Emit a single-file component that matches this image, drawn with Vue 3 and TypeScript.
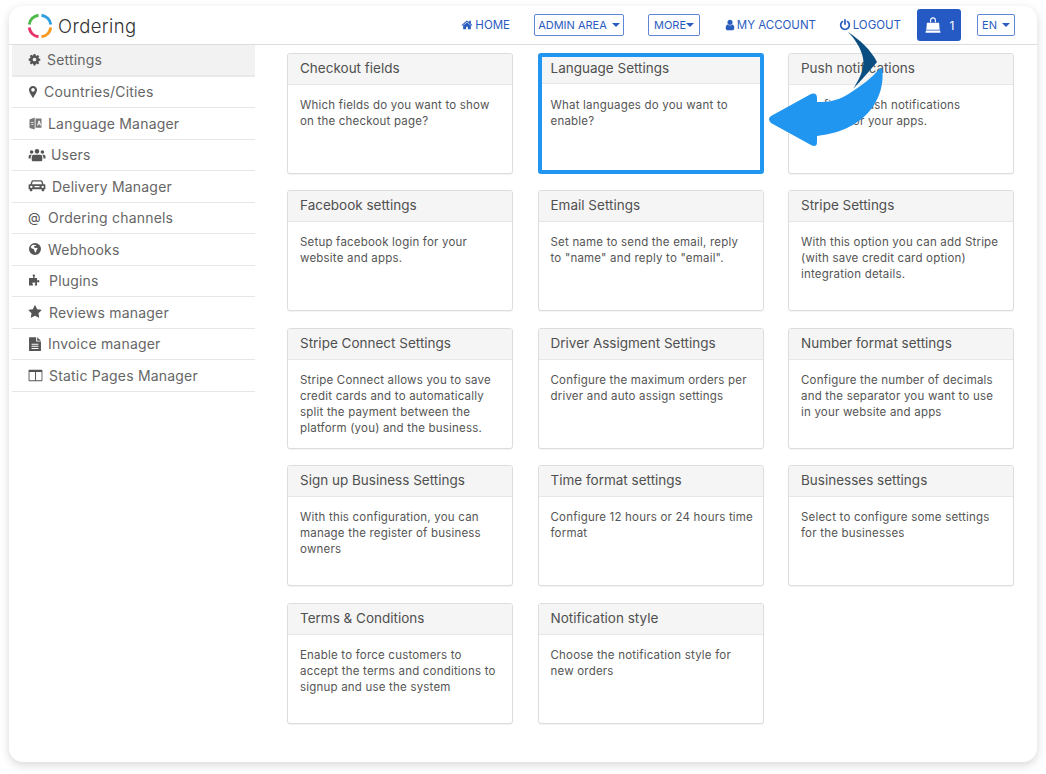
<script setup lang="ts">
interface Side { label: string; icon: string; w: number; gap: number; size: number }
interface Card { title: string; text: string; active?: boolean }

const fa: Record<string, string> = {
  home: 'M1472 992v480q0 26-19 45t-45 19h-384v-384h-256v384h-384q-26 0-45-19t-19-45v-480q0-1 .5-3t.5-3l575-474 575 474q1 2 1 6zm223-69l-62 74q-8 9-21 11h-3q-13 0-21-7l-692-577-692 577q-12 8-24 7-13-2-21-11l-62-74q-8-10-7-23.5t11-21.5l719-599q32-26 76-26t76 26l244 204v-195q0-14 9-23t23-9h192q14 0 23 9t9 23v408l219 182q10 8 11 21.5t-7 23.5z',
  user: 'M1536 1399q0 109-62.500 187t-150.500 78h-854q-88 0-150.500-78t-62.500-187q0-85 8.500-160.500t31.500-152 58.500-131 94-89 134.500-34.500q131 128 313 128t313-128q76 0 134.500 34.500t94 89 58.500 131 31.500 152 8.500 160.500zm-256-887q0 159-112.500 271.500t-271.500 112.500-271.500-112.500-112.500-271.500 112.500-271.500 271.500-112.500 271.500 112.500 112.500 271.500z',
  power: 'M1664 896q0 156-61 298t-164 245-245 164-298 61-298-61-245-164-164-245-61-298q0-182 80.500-343t226.500-270q43-32 95.500-25t83.500 50q32 42 24.500 94.500t-49.500 84.500q-98 74-151.500 181t-53.500 228q0 104 40.500 198.500t109.500 163.500 163.500 109.500 198.500 40.500 198.500-40.500 163.500-109.500 109.500-163.500 40.500-198.500q0-121-53.500-228t-151.500-181q-42-32-49.500-84.500t24.500-94.500q31-43 84-50t95 25q146 109 226.500 270t80.500 343zm-640-768v640q0 52-38 90t-90 38-90-38-38-90v-640q0-52 38-90t90-38 90 38 38 90z',
  star: 'M1728 647q0 22-26 48l-363 354 86 500q1 7 1 20 0 21-10.500 35.500t-30.500 14.500q-19 0-40-12l-449-236-449 236q-22 12-40 12-21 0-31.500-14.500t-10.500-35.500q0-6 2-20l86-500-364-354q-25-27-25-48 0-37 56-46l502-73 225-455q19-41 49-41t49 41l225 455 502 73q56 9 56 46z',
  gear: 'M896 1152a256 256 0 1 0 0-512 256 256 0 0 0 0 512zM768 128h256l40 200q70 20 130 58l170-112 182 182-112 170q38 60 58 130l200 40v256l-200 40q-20 70-58 130l112 170-182 182-170-112q-60 38-130 58l-40 200H768l-40-200q-70-20-130-58l-170 112-182-182 112-170q-38-60-58-130l-200-40V768l200-40q20-70 58-130L246 428l182-182 170 112q60-38 130-58z',
  marker: 'M896 128c-300 0-512 220-512 500 0 260 420 900 512 1036 92-136 512-776 512-1036 0-280-212-500-512-500zm0 730a230 230 0 1 1 0-460 230 230 0 0 1 0 460z',
  language: 'M180 420l620-240v1430l-620-190zM900 300h710v1110H900zM1250 560l-170 560h120l30-110h190l30 110h120l-170-560zM1260 900l50-190 50 190zM340 760h320v90H340zM400 980h240v90H400z',
  users: 'M896 300a230 230 0 1 1 0 460 230 230 0 0 1 0-460zM360 420a180 180 0 1 1 0 360 180 180 0 0 1 0-360zM1432 420a180 180 0 1 1 0 360 180 180 0 0 1 0-360zM560 860h672q190 0 190 300v240q0 120-130 120H500q-130 0-130-120v-240q0-300 190-300zM60 1240V1040q0-180 160-180h170q-120 90-130 300v80zM1740 1240h-200v-80q-10-210-130-300h170q160 0 160 180z',
  car: 'M480 320h832q90 0 125 85l105 315h90q100 0 100 100v400h-120v130q0 60-60 60h-130q-60 0-60-60v-130H430v130q0 60-60 60H240q-60 0-60-60v-130H60V820q0-100 100-100h90l105-315q35-85 125-85zm20 140q-20 0-28 20l-80 240h1008l-80-240q-8-20-28-20zM330 860a120 120 0 1 0 0 240 120 120 0 0 0 0-240zm1132 0a120 120 0 1 0 0 240 120 120 0 0 0 0-240zM650 900v120h492V900z',
  globe: 'M896 128a768 768 0 1 1 0 1536 768 768 0 0 1 0-1536zM760 340L520 420 340 640l140 180 260 60 60 220 120 240 110-40 60-280 160-160-110-130-240 40-150-120 120-160 140 30 60-100z',
  puzzle: 'M620 420q-70-70-70-130 0-110 150-110t150 110q0 60-70 130v180h300v300q90-70 160-70 120 0 120 150t-120 150q-70 0-160-70v420H820v-160q80-60 80-120 0-80-200-80t-200 80q0 60 80 120v160H120V600h500z',
  file: 'M1024 128v500h540v1000q0 60-60 60H288q-60 0-60-60V188q0-60 60-60zM1140 128l424 400h-424zM512 860v110h768V860zm0 240v110h768v-110zm0 240v110h768v-110z',
  columns: 'M140 220h1512q70 0 70 70v1210q0 70-70 70H140q-70 0-70-70V290q0-70 70-70zm40 250v990h660V470zm780 0v990h660V470z',
  bag: 'M600 620V450C600 250 720 130 896 130s296 120 296 320v170h-110V450c0-130-70-210-186-210s-186 80-186 210v170zM290 680h1212l60 700H230zM190 1450h1412l40 210H150z'
}

const sideItems: Side[] = [
  { label: 'Settings', icon: 'gear', w: 13, gap: 6, size: 13 },
  { label: 'Countries/Cities', icon: 'marker', w: 10, gap: 6, size: 14 },
  { label: 'Language Manager', icon: 'language', w: 14, gap: 6, size: 15 },
  { label: 'Users', icon: 'users', w: 17, gap: 6, size: 18 },
  { label: 'Delivery Manager', icon: 'car', w: 17, gap: 7, size: 18 },
  { label: 'Ordering channels', icon: 'at', w: 13, gap: 7, size: 13 },
  { label: 'Webhooks', icon: 'globe', w: 13, gap: 7, size: 14 },
  { label: 'Plugins', icon: 'puzzle', w: 14, gap: 7, size: 15 },
  { label: 'Reviews manager', icon: 'star', w: 14, gap: 7, size: 14 },
  { label: 'Invoice manager', icon: 'file', w: 13, gap: 7, size: 16 },
  { label: 'Static Pages Manager', icon: 'columns', w: 14, gap: 7, size: 15 }
]

const cards: Card[] = [
  { title: 'Checkout fields', text: 'Which fields do you want to show\non the checkout page?' },
  { title: 'Language Settings', text: 'What languages do you want to\nenable?', active: true },
  { title: 'Push notifications', text: 'Configure push notifications\nsettings for your apps.' },
  { title: 'Facebook settings', text: 'Setup facebook login for your\nwebsite and apps.' },
  { title: 'Email Settings', text: 'Set name to send the email, reply\nto "name" and reply to "email".' },
  { title: 'Stripe Settings', text: 'With this option you can add Stripe\n(with save credit card option)\nintegration details.' },
  { title: 'Stripe Connect Settings', text: 'Stripe Connect allows you to save\ncredit cards and to automatically\nsplit the payment between the\nplatform (you) and the business.' },
  { title: 'Driver Assigment Settings', text: 'Configure the maximum orders per\ndriver and auto assign settings' },
  { title: 'Number format settings', text: 'Configure the number of decimals\nand the separator you want to use\nin your website and apps' },
  { title: 'Sign up Business Settings', text: 'With this configuration, you can\nmanage the register of business\nowners' },
  { title: 'Time format settings', text: 'Configure 12 hours or 24 hours time\nformat' },
  { title: 'Businesses settings', text: 'Select to configure some settings\nfor the businesses' },
  { title: 'Terms & Conditions', text: 'Enable to force customers to\naccept the terms and conditions to\nsignup and use the system' },
  { title: 'Notification style', text: 'Choose the notification style for\nnew orders' }
]
</script>

<template>
  <div class="window">
    <header class="topbar">
      <div class="brand">
        <svg class="logo" width="26" height="26" viewBox="0 0 26 26" fill="none" stroke-width="3">
          <path d="M2.2 11.5A11 11 0 0 1 11.500 2.200" stroke="#4cb848" />
          <path d="M14.500 2.200A11 11 0 0 1 23.800 11.500" stroke="#2f9fe0" />
          <path d="M23.800 14.500A11 11 0 0 1 14.500 23.800" stroke="#f59a23" />
          <path d="M11.500 23.800A11 11 0 0 1 2.200 14.500" stroke="#e8336a" />
        </svg>
        <span class="brand-name">Ordering</span>
      </div>
      <nav class="nav">
        <a class="link l-home"><svg class="ic" viewBox="0 0 1792 1792"><path :d="fa.home" /></svg>HOME</a>
        <a class="pill p-admin">ADMIN AREA<i class="caret" /></a>
        <a class="pill p-more">MORE<i class="caret tight" /></a>
        <a class="link l-acct"><svg class="ic" viewBox="0 0 1792 1792"><path :d="fa.user" /></svg>MY ACCOUNT</a>
        <a class="link l-out"><svg class="ic" viewBox="0 0 1792 1792"><path :d="fa.power" /></svg>LOGOUT</a>
        <a class="cart"><svg width="18" height="18" viewBox="0 0 1792 1792"><path :d="fa.bag" fill="#fff" /></svg><span>1</span></a>
        <a class="pill p-lang">EN<i class="caret" /></a>
      </nav>
    </header>

    <div class="content">
      <aside class="side">
        <a v-for="(s, i) in sideItems" :key="s.label" class="side-row" :class="{ current: i === 0 }">
          <span class="side-ic" :class="{ soft: s.icon === 'language' }" :style="{ width: s.w + 'px', marginRight: s.gap + 'px' }">
            <span v-if="s.icon === 'at'" class="at">@</span>
            <svg v-else viewBox="0 0 1792 1792" :width="s.size" :height="s.size"><path :d="fa[s.icon]" fill-rule="evenodd" /></svg>
          </span>
          <span>{{ s.label }}</span>
        </a>
      </aside>

      <main class="grid">
        <section v-for="c in cards" :key="c.title" class="card" :class="{ active: c.active }">
          <h3 class="card-head">{{ c.title }}</h3>
          <p class="card-body">{{ c.text }}</p>
        </section>
      </main>
    </div>

    <svg class="arrow" width="130" height="130" viewBox="0 0 130 130">
      <path d="M0 0 C12 8 23 18 29 30 C22 38 13 49 5 57 C12 46 17 36 15 26 C13 16 7 7 0 0 Z" fill="#0a4d80" />
      <path d="M34 36 C38 62 22 98 -31 104 L-31 110 Q-31 116 -37 113 L-77 91 Q-81 87 -77 84 L-37 62 Q-31 60 -31 66 L-31 70 C-15 71 -3 65 5 59 C14 53 24 46 31 37 Z" fill="#2196f0" />
    </svg>
  </div>
</template>

<style>
html, body { margin: 0; background: #fff; min-height: 774px; }
</style>

<style scoped>
.window {
  position: relative;
  box-sizing: border-box;
  width: 1028px;
  height: 756px;
  margin: 6px 0 0 9px;
  background: #fff;
  border-radius: 14px;
  box-shadow: 0 3px 10px rgba(0, 0, 0, 0.16);
  font-family: Inter, "Open Sans", sans-serif;
  color: #555;
}
.topbar {
  display: flex;
  align-items: center;
  justify-content: space-between;
  box-sizing: border-box;
  height: 39px;
  padding: 0 22px 0 18px;
  border-bottom: 1px solid #ddd;
}
.brand { display: flex; align-items: center; gap: 5px; margin-top: 1px; }
.logo { width: 26px; height: 26px; }
.brand-name { font-size: 18.500px; font-weight: 300; color: #333; letter-spacing: 0.4px; }
.nav { display: flex; align-items: center; color: #2a5cbf; font-size: 11.500px; }
.link { display: flex; align-items: center; justify-content: space-between; white-space: nowrap; }
.ic { flex: none; width: 12px; height: 12px; fill: #2a5cbf; }
.l-home { width: 49px; margin-right: 24px; }
.l-acct { width: 92px; margin-right: 23px; }
.l-out { width: 62px; margin-right: 16px; }
.pill {
  display: flex;
  align-items: center;
  justify-content: center;
  box-sizing: border-box;
  height: 22px;
  border: 1px solid #5f86d4;
  border-radius: 2px;
  font-size: 11px;
  white-space: nowrap;
}
.p-admin { width: 90px; margin-right: 24px; }
.p-more { width: 52px; margin-right: 24px; }
.p-lang { width: 38px; }
.caret {
  display: inline-block;
  width: 0;
  height: 0;
  margin-left: 5px;
  border-left: 4px solid transparent;
  border-right: 4px solid transparent;
  border-top: 4px solid #2a5cbf;
}
.caret.tight { margin-left: 0; }
.cart {
  display: flex;
  align-items: center;
  justify-content: center;
  gap: 8px;
  box-sizing: border-box;
  width: 44px;
  height: 32px;
  margin-right: 16px;
  border-radius: 3px;
  background: #2559c4;
  color: #fff;
  font-size: 12px;
}
.content { display: flex; align-items: flex-start; }
.side { width: 243px; margin-left: 3px; flex: none; }
.side-row {
  display: flex;
  align-items: center;
  box-sizing: border-box;
  height: 31.500px;
  padding-left: 16px;
  border-bottom: 1px solid #e7e7e7;
  font-size: 14px;
  color: #666;
  letter-spacing: 0.2px;
  white-space: nowrap;
}
.side-row.current { background: #f2f2f2; border-bottom: 2px solid #e9e9e9; }
.side-ic { display: inline-flex; align-items: center; justify-content: center; flex: none; }
.side-ic svg { fill: #555; display: block; flex: none; }
.side-ic.soft svg { fill: #777; }
.at { font-size: 13px; color: #555; line-height: 1; }
.grid {
  display: grid;
  grid-template-columns: repeat(3, 226px);
  grid-auto-rows: 121px;
  column-gap: 24.500px;
  row-gap: 16.400px;
  margin: 8px 0 0 32px;
}
.card {
  box-sizing: border-box;
  border: 1px solid #ddd;
  border-radius: 3px;
  background: #fff;
  box-shadow: 0 1px 1px rgba(0, 0, 0, 0.05);
  overflow: hidden;
}
.card.active { border: 4px solid #2196f0; box-shadow: none; }
.card-head {
  box-sizing: border-box;
  height: 31px;
  margin: 0;
  padding: 6px 12px 0;
  background: #f5f5f5;
  border-bottom: 1px solid #e6e6e6;
  font-size: 13.500px;
  line-height: 16px;
  font-weight: 400;
  color: #505050;
  white-space: nowrap;
}
.card-body {
  margin: 0;
  padding: 12px 4px 0 12px;
  font-size: 11.500px;
  line-height: 16px;
  letter-spacing: 0.2px;
  color: #555;
  white-space: pre-line;
}
.card.active .card-head { height: 27px; padding: 3px 9px 0; }
.card.active .card-body { padding: 13px 4px 0 9px; }
.arrow {
  position: absolute;
  left: 839px;
  top: 26px;
  overflow: visible;
}
</style>
